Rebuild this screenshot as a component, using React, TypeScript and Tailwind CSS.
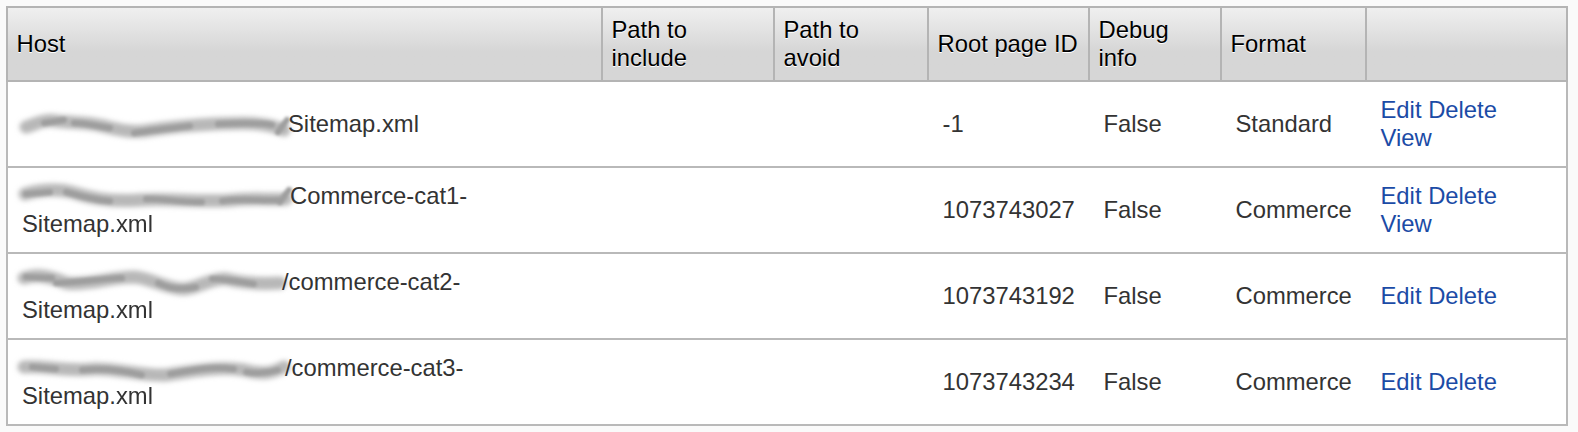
type Row = {
  width: number;
  wide: string;
  narrow: string;
  head: string;
  tail?: string;
  id: string;
  fmt: string;
  view: boolean;
  smudge?: boolean;
  soft?: string;
};

const rows: Row[] = [
  {
    width: 266,
    wide: "M4 17 C14 14 22 9 34 11 C50 13 62 12 76 15 C92 18 104 23 122 21 C142 18 166 15 192 14 C216 13 240 11 262 20",
    narrow: "M22 13 L42 10 M52 13 C66 13 78 17 88 18 M112 23 C132 20 150 18 168 16 M196 14 C216 13 236 12 250 15 M256 22 L265 10",
    head: "Sitemap.xml",
    id: "-1",
    fmt: "Standard",
    view: true,
    smudge: true,
  },
  {
    width: 268,
    wide: "M3 12 C18 8 38 6 56 12 C72 17 92 20 118 18 C150 16 180 21 212 18 C232 16 250 18 264 17",
    narrow: "M4 12 L28 10 M44 10 C58 14 72 18 88 19 M124 17 C140 16 160 21 180 20 M200 19 C220 16 240 19 256 18 M258 20 L267 8",
    head: "Commerce-cat1-",
    tail: "Sitemap.",
    soft: "xml",
    id: "1073743027",
    fmt: "Commerce",
    view: true,
  },
  {
    width: 260,
    wide: "M2 10 C16 5 30 9 44 15 C66 18 88 9 112 9 C128 10 142 20 160 21 C176 21 186 10 204 11 C220 15 240 16 258 15",
    narrow: "M4 9 L30 10 M34 15 C54 15 76 11 100 10 M136 15 C146 20 160 22 174 19 M190 11 C202 10 216 14 232 16",
    head: "/commerce-cat2-",
    tail: "Sitemap.",
    soft: "xml",
    id: "1073743192",
    fmt: "Commerce",
    view: false,
  },
  {
    width: 263,
    wide: "M2 13 C20 11 44 18 72 15 C96 14 118 22 144 21 C170 17 196 12 222 16 C240 21 250 19 262 13",
    narrow: "M10 13 L34 15 M60 16 C80 14 104 17 120 21 M148 20 C170 16 190 12 212 15 M224 18 C236 20 246 19 256 16",
    head: "/commerce-cat3-",
    tail: "Sitemap.",
    soft: "xml",
    id: "1073743234",
    fmt: "Commerce",
    view: false,
  },
];

const th = "border-2 border-[#b4b4b4] px-[8.5px] py-0 text-left align-middle font-normal text-black [text-shadow:0_1px_0_#fff]";
const td = "border-y-2 border-[#b9b9b9] px-[14.5px] py-0 align-middle first:border-l-2 first:pl-[14px] last:border-r-2";

export default function App() {
  return (
    <div className="h-[432px] w-[1578px] overflow-hidden bg-[#fafafa] pt-[6px] pl-[6px] font-['Liberation_Sans',Arial,sans-serif] text-[23.8px] leading-[28px] text-[#333]">
      <svg width="0" height="0" className="absolute">
        <filter id="smearWide" x="-10%" y="-150%" width="120%" height="400%">
          <feGaussianBlur stdDeviation="2.4" />
        </filter>
        <filter id="smearNarrow" x="-10%" y="-150%" width="120%" height="400%">
          <feGaussianBlur stdDeviation="1.8" />
        </filter>
      </svg>
      <table className="w-[1560px] table-fixed border-collapse bg-white">
        <colgroup>
          <col className="w-[595px]" />
          <col className="w-[172px]" />
          <col className="w-[154px]" />
          <col className="w-[161px]" />
          <col className="w-[132px]" />
          <col className="w-[145px]" />
          <col className="w-[201px]" />
        </colgroup>
        <thead>
          <tr className="h-[74px] bg-gradient-to-b from-[#f0f0f0] to-[#d6d6d6] to-60%">
            <th className={th}>Host</th>
            <th className={th}>Path to include</th>
            <th className={th}>Path to avoid</th>
            <th className={th + " whitespace-nowrap"}>Root page ID</th>
            <th className={th}>Debug info</th>
            <th className={th}>Format</th>
            <th className={th}></th>
          </tr>
        </thead>
        <tbody>
          {rows.map((r) => (
            <tr key={r.id} className="h-[86px]">
              <td className={td}>
                <svg width={r.width} height="28" className="inline-block overflow-visible align-top" aria-hidden="true">
                  {r.smudge && (
                    <path d="M-15 -24 L-15 22" fill="none" stroke="#ffffff" strokeOpacity="0.75" strokeWidth="5" filter="url(#smearNarrow)" />
                  )}
                  <path d={r.wide} fill="none" stroke="#b8b8b8" strokeWidth="13" strokeLinecap="round" filter="url(#smearWide)" />
                  <path d={r.narrow} fill="none" stroke="#9e9e9e" strokeWidth="6" strokeLinecap="round" filter="url(#smearNarrow)" />
                </svg>
                {r.head}
                {r.tail && <br />}
                {r.tail}
                {r.soft && <span className="inline-block blur-[0.7px]">{r.soft}</span>}
              </td>
              <td className={td}></td>
              <td className={td}></td>
              <td className={td}>{r.id}</td>
              <td className={td}>False</td>
              <td className={td}>{r.fmt}</td>
              <td className={td}>
                <a className="text-[#1b4ba6]" href="#">Edit</a>{" "}
                <a className="text-[#1b4ba6]" href="#">Delete</a>{" "}
                {r.view && <a className="text-[#1b4ba6]" href="#">View</a>}
              </td>
            </tr>
          ))}
        </tbody>
      </table>
    </div>
  );
}
